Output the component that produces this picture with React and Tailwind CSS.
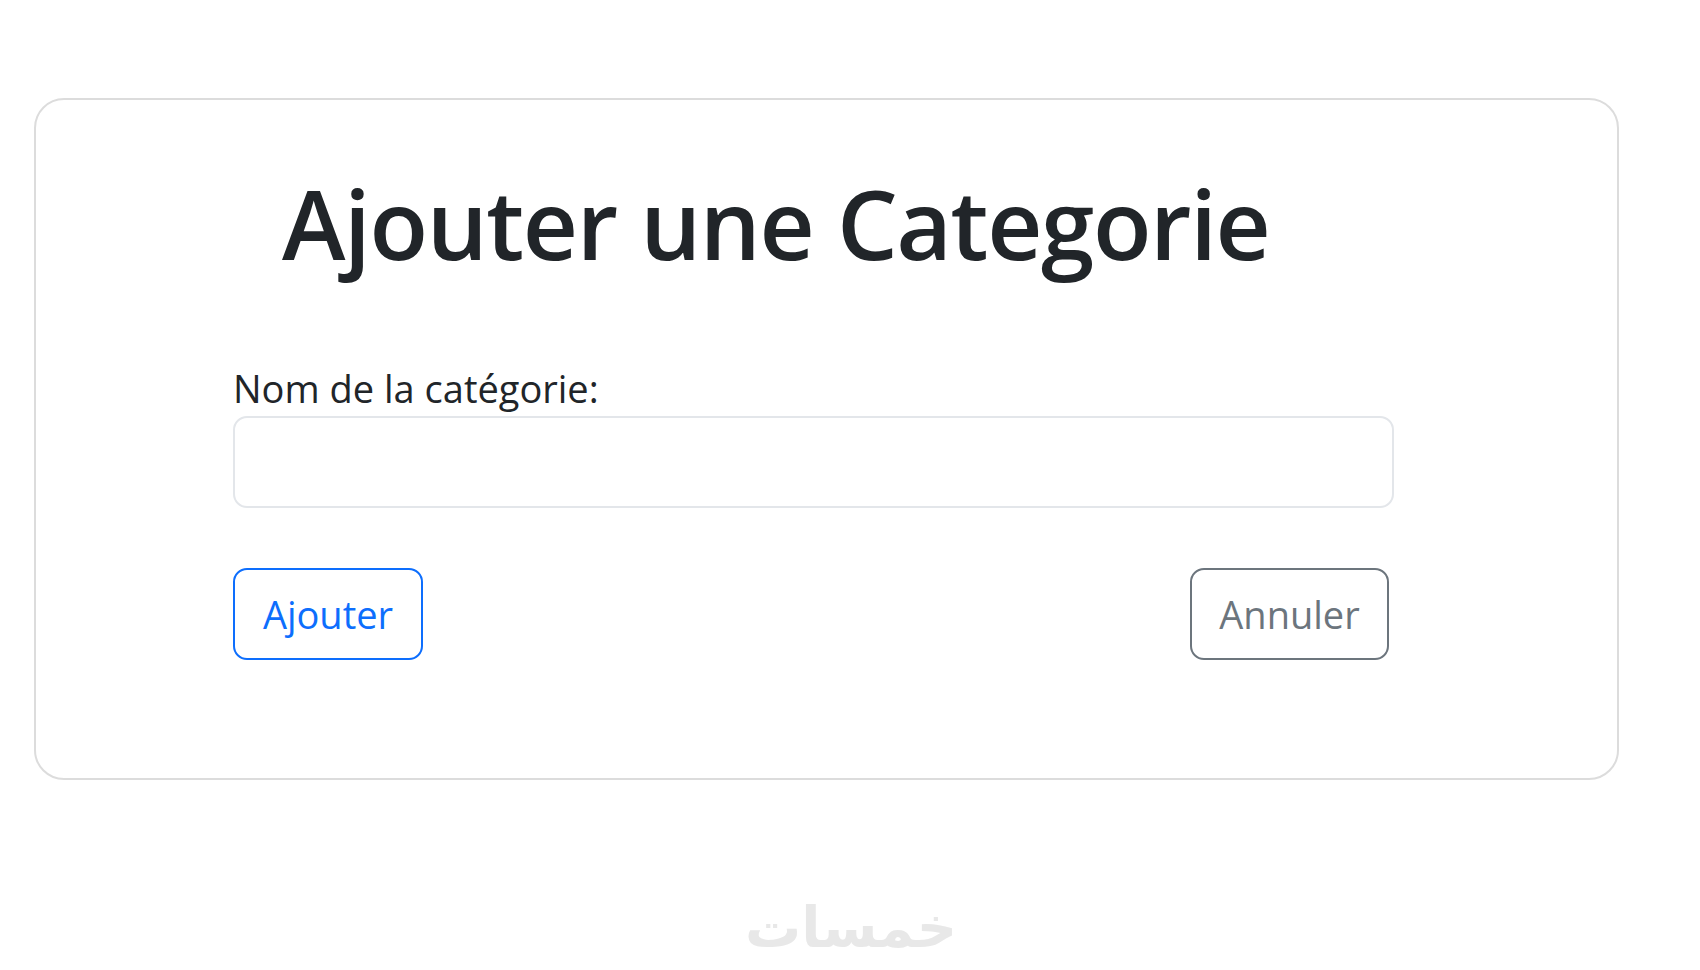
export default function App() {
  return (
    <div className="min-h-[970px] bg-white font-['Open_Sans',sans-serif] text-[#212529] flex flex-col">
      <div className="ml-[34px] mt-[98px] w-[1585px] h-[682px] border-2 border-[#dcdcdc] rounded-[30px] flex flex-col">
        <h1 className="ml-[246px] mt-[68px] text-[96px] leading-[110px] font-semibold tracking-[-1.4px]">
          Ajouter une Categorie
        </h1>

        <form className="ml-[197px] mt-[88px] w-[1161px] flex flex-col">
          <label className="text-[38px] leading-[44px]">Nom de la catégorie:</label>
          <input
            type="text"
            className="mt-[6px] h-[92px] w-full border-2 border-[#e3e6ea] rounded-[14px] px-5 text-[37px] outline-none"
          />
          <div className="mt-[60px] flex items-center justify-between pr-[5px]">
            <button
              type="button"
              className="h-[92px] w-[190px] border-2 border-[#0d6efd] rounded-[14px] text-[#0d6efd] text-[38px] bg-white"
            >
              Ajouter
            </button>
            <button
              type="button"
              className="h-[92px] w-[199px] border-2 border-[#6c757d] rounded-[14px] text-[#6c757d] text-[38px] bg-white"
            >
              Annuler
            </button>
          </div>
        </form>
      </div>

      <div className="mt-[118px] flex justify-center pl-[2px]">
        <span
          dir="rtl"
          className="font-['DejaVu_Sans',sans-serif] font-bold text-[56px] leading-[60px] text-[#e8e8e8]"
        >
          خمسات
        </span>
      </div>
    </div>
  );
}
